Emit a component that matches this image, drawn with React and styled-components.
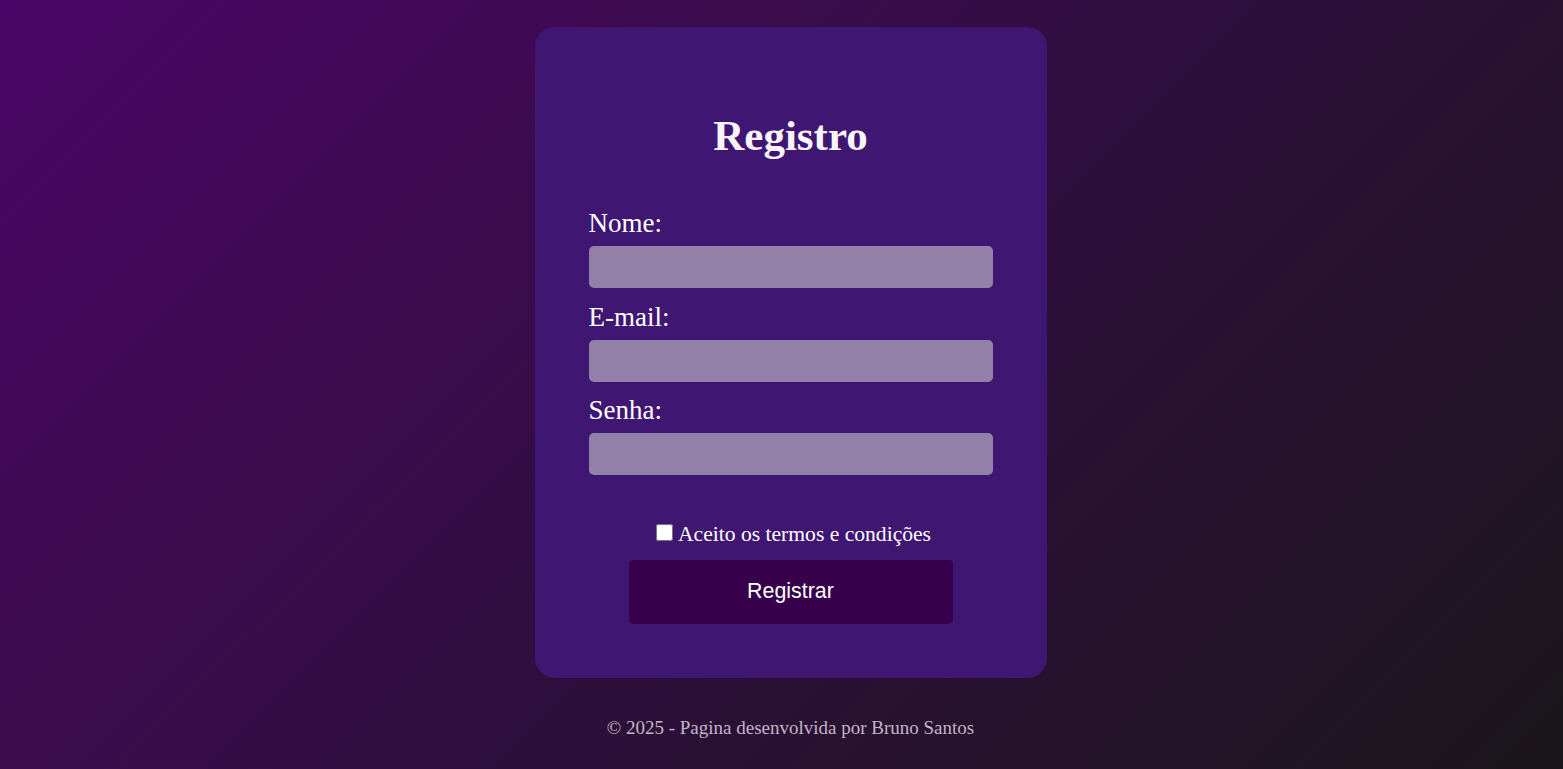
import styled, { createGlobalStyle } from "styled-components";

const GlobalStyle = createGlobalStyle`
  html, body {
    margin: 0;
    padding: 0;
  }
  body {
    font-family: "Liberation Serif", "Times New Roman", serif;
    color: #ffffff;
  }
`;

const Page = styled.div`
  min-height: 100vh;
  box-sizing: border-box;
  display: flex;
  flex-direction: column;
  align-items: center;
  padding: 27px 0 0 18px;
  background: linear-gradient(135deg, #4c0667 0%, #2e0f3b 55%, #1a161a 100%);
`;

const Card = styled.form`
  width: 512px;
  box-sizing: border-box;
  padding: 59px 54px 54px;
  border-radius: 20px;
  background: #3f1672;
  display: flex;
  flex-direction: column;
`;

const Title = styled.h1`
  margin: 28px 0 53px;
  font-size: 43px;
  line-height: 1;
  font-weight: bold;
  text-align: center;
  color: #f8f4fc;
`;

const Field = styled.div`
  display: flex;
  flex-direction: column;
  margin-top: ${(p) => (p.$first ? "0" : "15.5px")};
`;

const Label = styled.label`
  font-size: 27px;
  line-height: 1;
  margin-bottom: 9px;
`;

const Input = styled.input`
  height: 42px;
  box-sizing: border-box;
  border: none;
  border-radius: 5px;
  background: #9380a9;
  padding: 0 10px;
  font-size: 16px;
  color: #fff;
  outline: none;
`;

const Terms = styled.label`
  display: flex;
  justify-content: center;
  align-items: flex-start;
  gap: 5px;
  margin-top: 49px;
  padding-left: 6px;
  font-size: 21.6px;
  line-height: 1;
`;

const Check = styled.input`
  width: 17px;
  height: 17px;
  margin: 0;
`;

const Button = styled.button`
  align-self: center;
  width: 324px;
  height: 64px;
  margin-top: 14px;
  border: none;
  border-radius: 5px;
  background: #36004a;
  color: #fff;
  font-family: "Liberation Sans", Arial, sans-serif;
  font-size: 21.4px;
  cursor: pointer;
`;

const Footer = styled.footer`
  margin-top: 40px;
  font-size: 19px;
  line-height: 1;
  color: #c2b6c8;
`;

const App = () => {
  return (
    <Page>
      <GlobalStyle />
      <Card onSubmit={(e) => e.preventDefault()}>
        <Title>Registro</Title>
        <Field $first>
          <Label htmlFor="nome">Nome:</Label>
          <Input id="nome" type="text" />
        </Field>
        <Field>
          <Label htmlFor="email">E-mail:</Label>
          <Input id="email" type="email" />
        </Field>
        <Field>
          <Label htmlFor="senha">Senha:</Label>
          <Input id="senha" type="password" />
        </Field>
        <Terms>
          <Check type="checkbox" />
          Aceito os termos e condições
        </Terms>
        <Button type="submit">Registrar</Button>
      </Card>
      <Footer>© 2025 - Pagina desenvolvida por Bruno Santos</Footer>
    </Page>
  );
};

export default App;
